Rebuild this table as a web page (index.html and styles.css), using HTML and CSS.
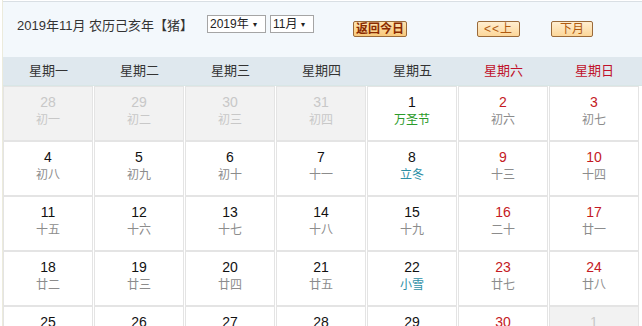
FILE: index.html
```html
<!DOCTYPE html>
<html lang="zh-CN">
<head>
<meta charset="utf-8">
<link rel="stylesheet" href="styles.css">
</head>
<body>
<div class="cal">
  <div class="top">
    <span class="title">2019年11月 农历己亥年【猪】</span>
    <span class="sel s-year">2019年<i>▾</i></span>
    <span class="sel s-month">11月<i>▾</i></span>
    <span class="btn today">返回今日</span>
    <span class="btn prev">&lt;&lt;上</span>
    <span class="btn next">下月</span>
  </div>
  <div class="week">
    <div>星期一</div><div>星期二</div><div>星期三</div><div>星期四</div><div>星期五</div><div class="we">星期六</div><div class="we">星期日</div>
  </div>
  <div class="grid">
    <div class="c other"><b>28</b><span>初一</span></div>
    <div class="c other"><b>29</b><span>初二</span></div>
    <div class="c other"><b>30</b><span>初三</span></div>
    <div class="c other"><b>31</b><span>初四</span></div>
    <div class="c"><b>1</b><span class="fest">万圣节</span></div>
    <div class="c red"><b>2</b><span>初六</span></div>
    <div class="c red"><b>3</b><span>初七</span></div>

    <div class="c"><b>4</b><span>初八</span></div>
    <div class="c"><b>5</b><span>初九</span></div>
    <div class="c"><b>6</b><span>初十</span></div>
    <div class="c"><b>7</b><span>十一</span></div>
    <div class="c"><b>8</b><span class="term">立冬</span></div>
    <div class="c red"><b>9</b><span>十三</span></div>
    <div class="c red"><b>10</b><span>十四</span></div>

    <div class="c"><b>11</b><span>十五</span></div>
    <div class="c"><b>12</b><span>十六</span></div>
    <div class="c"><b>13</b><span>十七</span></div>
    <div class="c"><b>14</b><span>十八</span></div>
    <div class="c"><b>15</b><span>十九</span></div>
    <div class="c red"><b>16</b><span>二十</span></div>
    <div class="c red"><b>17</b><span>廿一</span></div>

    <div class="c"><b>18</b><span>廿二</span></div>
    <div class="c"><b>19</b><span>廿三</span></div>
    <div class="c"><b>20</b><span>廿四</span></div>
    <div class="c"><b>21</b><span>廿五</span></div>
    <div class="c"><b>22</b><span class="term">小雪</span></div>
    <div class="c red"><b>23</b><span>廿七</span></div>
    <div class="c red"><b>24</b><span>廿八</span></div>

    <div class="c"><b>25</b><span>廿九</span></div>
    <div class="c"><b>26</b><span>三十</span></div>
    <div class="c"><b>27</b><span>十月</span></div>
    <div class="c"><b>28</b><span>初二</span></div>
    <div class="c"><b>29</b><span>初三</span></div>
    <div class="c red"><b>30</b><span>初四</span></div>
    <div class="c other"><b>1</b><span>初五</span></div>
  </div>
</div>
</body>
</html>
```
FILE: styles.css
```css
html, body { margin: 0; padding: 0; background: #fff; }
body { font-family: "Liberation Sans", "Noto Sans CJK SC", sans-serif; color: #333; }
.cal { width: 640px; margin-left: 2px; border-left: 1px solid #ecebdc; height: 326px; overflow: hidden; }
.top {
  height: 55px; border-top: 1px solid #d9dfe4; margin-top: 1px;
  background: #f3f8fc; position: relative; font-size: 13px;
}
.title { position: absolute; left: 14px; top: 13px; color: #333; }
.sel {
  position: absolute; top: 13px; line-height: 16px;
  border: 1px solid #a5a5a5; background: #fff; font-size: 12px; color: #222;
  padding: 0 3px 0 2px; box-sizing: border-box; height: 18px;
}
.sel i { font-style: normal; font-size: 8px; margin-left: 4px; vertical-align: 1px; }
.s-year { left: 204px; width: 59px; }
.s-month { left: 267px; width: 44px; }
.btn {
  position: absolute; top: 19px; height: 16px; line-height: 14px;
  box-sizing: border-box; font-size: 12px; text-align: center;
  border: 1px solid #9a6a3a; border-radius: 2px;
  background: linear-gradient(#ffeed0, #fcd79a);
}
.today { left: 350px; width: 54px; color: #8a2a00; font-weight: bold; background: linear-gradient(#fde3b0, #f8c97c); }
.prev { left: 474px; width: 43px; color: #b05a10; letter-spacing: 1px; }
.next { left: 548px; width: 42px; color: #b05a10; }
.week {
  display: grid; grid-template-columns: repeat(7, 91px);
  height: 28px; background: #dfe8ee; border-bottom: 1px solid #d8e6e6;
  font-size: 13px; line-height: 27px; text-align: center; color: #333;
}
.week .we { color: #c0102a; }
.grid {
  display: grid; grid-template-columns: repeat(7, 91px); grid-auto-rows: 55px;
}
.c {
  border: 1px solid #e4e4e4; margin: 0 1px 0 0; box-sizing: border-box;
  display: flex; flex-direction: column; align-items: center; padding-top: 6px;
}
.c b { font-weight: normal; font-size: 14px; line-height: 18px; color: #111; }
.c span { font-size: 12px; line-height: 18px; color: #8c8c8c; }
.c.red b { color: #c41a24; }
.c.other { background: #f2f2f2; }
.c.other b, .c.other span { color: #c8c8c8; }
.c span.fest { color: #2a9a2a; }
.c span.term { color: #2d8fa6; }
```
